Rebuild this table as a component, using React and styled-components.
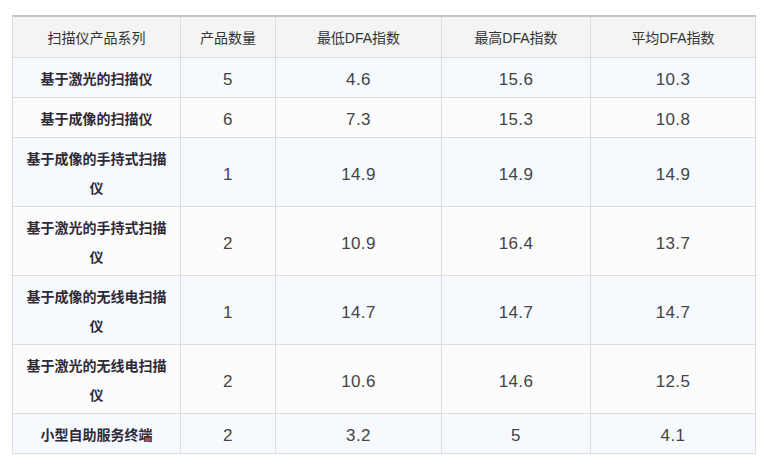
import React from "react";
import styled, { createGlobalStyle } from "styled-components";

const Global = createGlobalStyle`
  html, body { margin: 0; padding: 0; background: #fff; }
  body { font-family: "Liberation Sans", "Noto Sans CJK SC", sans-serif; color: #333; }
`;

const Page = styled.div`
  padding: 15px 0 0 12px;
`;

const Table = styled.table`
  border-collapse: separate;
  border-spacing: 0;
  table-layout: fixed;
  width: 744px;
  border-top: 2px solid #c4c4c4;
  border-left: 1px solid #dcdcdc;
  box-sizing: border-box;
`;

const Th = styled.th`
  box-sizing: border-box;
  background: #f4f4f4;
  font-family: "Liberation Sans", "Noto Sans CJK SC", sans-serif;
  font-size: 14px;
  font-weight: normal;
  color: #333;
  line-height: 30px;
  padding: 6px 10px 4px;
  text-align: center;
  border-right: 1px solid #dcdcdc;
  border-bottom: 1px solid #dcdcdc;
`;

const Row = styled.tr`
  background: ${(p) => (p.$odd ? "#f6f9fe" : "#fcfcfc")};
`;

const Td = styled.td`
  box-sizing: border-box;
  padding: 7px 10px 3px;
  line-height: 29px;
  text-align: center;
  vertical-align: middle;
  border-right: 1px solid #dcdcdc;
  border-bottom: 1px solid #dcdcdc;
  color: ${(p) => (p.$name ? "#2e2a36" : "#444")};
  font-size: ${(p) => (p.$name ? "14px" : "17px")};
  font-weight: ${(p) => (p.$name ? "bold" : "normal")};
  letter-spacing: ${(p) => (p.$name ? "0" : "0.4px")};
  font-family: "Liberation Sans", "Noto Sans CJK SC", sans-serif;
`;

const widths = [168, 95, 166, 149, 165];
const headers = ["扫描仪产品系列", "产品数量", "最低DFA指数", "最高DFA指数", "平均DFA指数"];
const rows = [
  ["基于激光的扫描仪", "5", "4.6", "15.6", "10.3"],
  ["基于成像的扫描仪", "6", "7.3", "15.3", "10.8"],
  ["基于成像的手持式扫描仪", "1", "14.9", "14.9", "14.9"],
  ["基于激光的手持式扫描仪", "2", "10.9", "16.4", "13.7"],
  ["基于成像的无线电扫描仪", "1", "14.7", "14.7", "14.7"],
  ["基于激光的无线电扫描仪", "2", "10.6", "14.6", "12.5"],
  ["小型自助服务终端", "2", "3.2", "5", "4.1"],
];

export default function App() {
  return (
    <>
      <Global />
      <Page>
        <Table>
          <colgroup>
            {widths.map((w, i) => (
              <col key={i} style={{ width: w }} />
            ))}
          </colgroup>
          <thead>
            <tr>
              {headers.map((h) => (
                <Th key={h}>{h}</Th>
              ))}
            </tr>
          </thead>
          <tbody>
            {rows.map((r, i) => (
              <Row key={i} $odd={i % 2 === 0}>
                {r.map((c, j) => (
                  <Td key={j} $name={j === 0}>
                    {c}
                  </Td>
                ))}
              </Row>
            ))}
          </tbody>
        </Table>
      </Page>
    </>
  );
}
